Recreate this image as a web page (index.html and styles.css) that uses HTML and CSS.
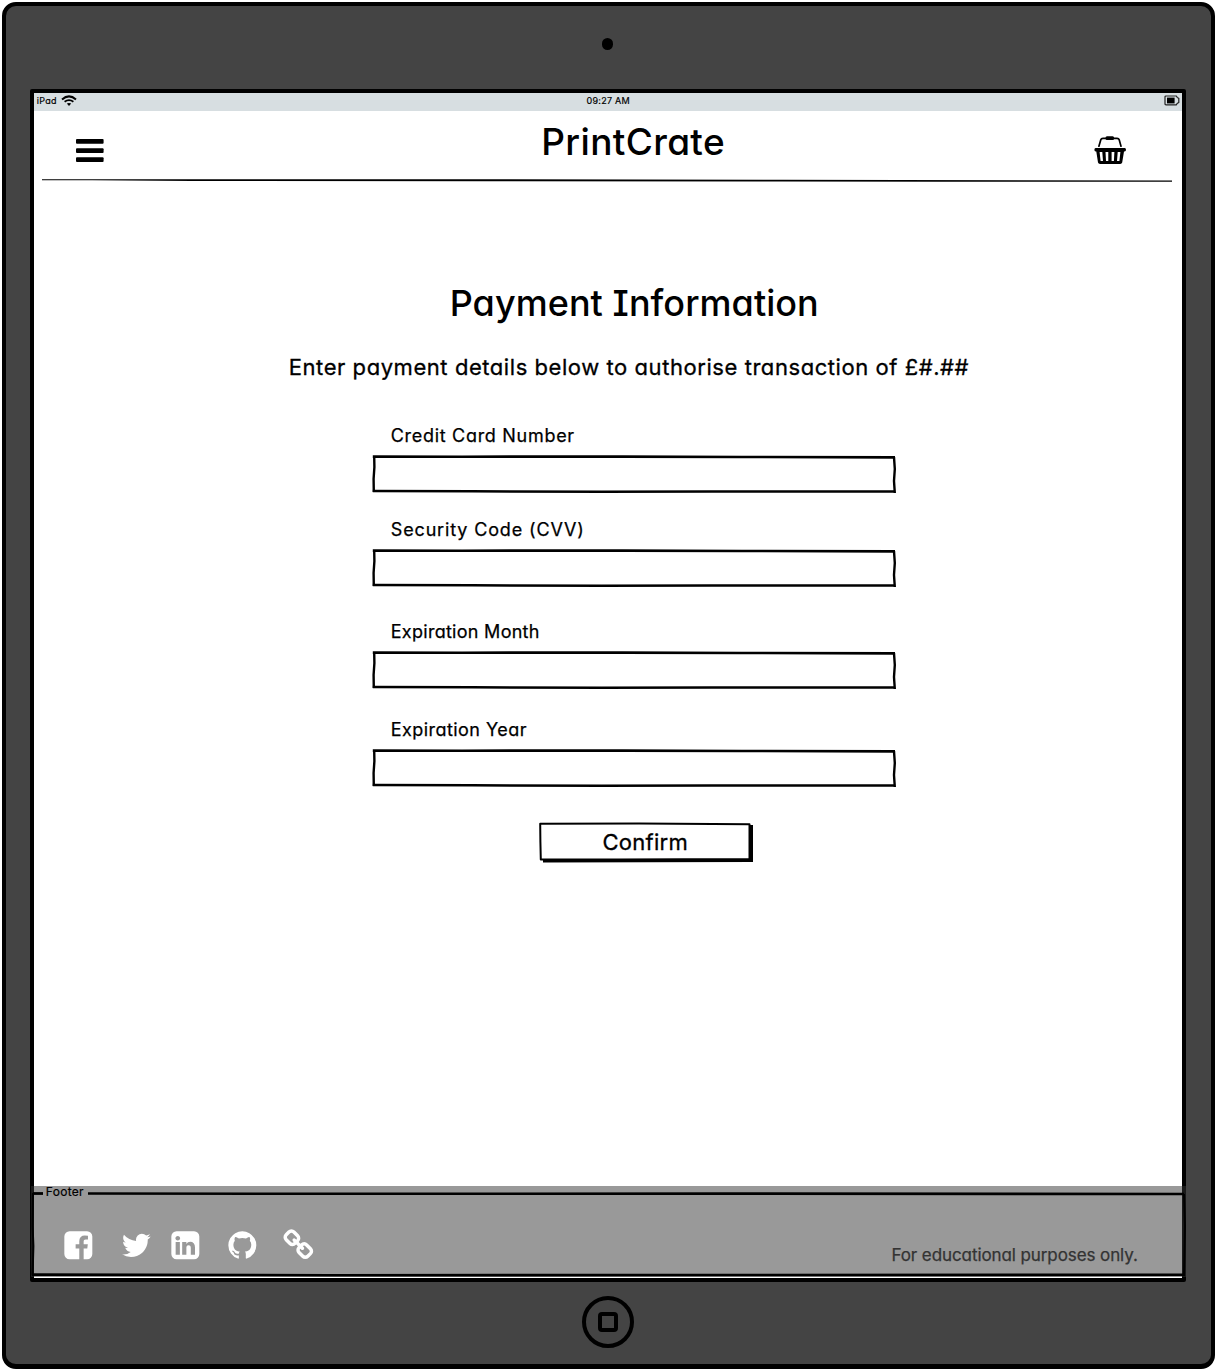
FILE: index.html
```html
<!DOCTYPE html>
<html lang="en">
<head>
<meta charset="utf-8">
<title>PrintCrate - Payment Information</title>
<link rel="stylesheet" href="styles.css">
</head>
<body>
<svg class="defs" width="0" height="0" aria-hidden="true">
  <symbol id="sketch-field" viewBox="0 0 524 38">
    <path fill="#fff" stroke="none" d="M2 2.5L522 3L522 36.5L2 36Z"/>
    <path stroke-width="2.6" d="M.8 1.6L90 1.7L250 1.6L370 2L523 2.400"/>
    <path stroke-width="2.4" d="M2.2 1L2.4 12L1.6 24L1.8 37"/>
    <path stroke-width="2.4" d="M522 2.2L522.8 14L522 26L522.8 38"/>
    <path stroke-width="2.5" d="M.8 36L100 36.3L230 36.7L340 36.5L523 36.5"/>
  </symbol>
</svg>
<div class="device">
  <div class="camera"></div>
  <div class="screen">
    <div class="status">
      <span class="carrier">iPad</span>
      <svg class="wifi" viewBox="0 0 16 11"><g fill="none" stroke="#000"><path stroke-width="2" d="M1 4.4Q8-1.6 15 4.4"/><path stroke-width="1.8" d="M3.6 6.8Q8 3.4 12.4 6.8"/></g><path d="M5.8 8.6Q8 7.2 10.2 8.6L8 11Z"/></svg>
      <span class="time">09:27 AM</span>
      <svg class="battery" viewBox="0 0 16 11"><path fill="none" stroke="#222" stroke-width="1.2" d="M2 1H12.3L13.2 2.4L14.8 3.4V7.4L13.2 8.4L12.3 9.8H2Q1 9.8 1 8.8V2Q1 1 2 1Z"/><path d="M3 2.6H10.6V8.4H3Z"/></svg>
    </div>
    <header class="header">
      <svg class="menu" viewBox="0 0 28 24"><rect width="27.6" height="4.8" y="0" rx="1"/><rect width="27.6" height="4.8" y="9.2" rx="1"/><rect width="27.6" height="4.8" y="18.2" rx="1"/></svg>
      <h1 class="brand">PrintCrate</h1>
      <svg class="basket" viewBox="0 0 32 29"><path fill="none" stroke="#000" stroke-width="1.7" stroke-linecap="round" stroke-linejoin="round" d="M4.9 10.2L6.8 3.8Q7.2 2.4 9 2.3H23Q24.8 2.4 25.2 3.8L27 10.2"/><rect x="11.5" y=".3" width="8.6" height="3.6" rx="1.5"/><path fill-rule="evenodd" d="M1.6 12H30.8Q32 12 32 13.8T30.6 15.6H30L28.2 26.6Q27.8 28 26.2 28H6Q4.400 28 4 26.600L2.300 15.600H1.700Q.4 15.600.4 13.800T1.600 12ZM5.600 16L6.600 25H9L8.300 16ZM11.500 16L12 25H14.300V16ZM17.600 16V25H19.900L20.400 16ZM23.700 16L23 25H25.400L26.400 16Z"/></svg>
    </header>
    <svg class="divider" viewBox="0 0 1130 4"><path d="M0 .2L190 .2L450 .3L740 .8L1130 1.400V2.700L900 2.700L740 2.600L450 2.300L150 2L50 1.300L0 1.200Z"/></svg>

    <main class="main">
      <h2 class="title">Payment Information</h2>
      <p class="lead">Enter payment details below to authorise transaction of £#.##</p>
      <form class="form">
        <div class="field card"><label>Credit Card Number</label><svg><use href="#sketch-field"/></svg></div>
        <div class="field code"><label>Security Code (CVV)</label><svg><use href="#sketch-field"/></svg></div>
        <div class="field month"><label>Expiration Month</label><svg><use href="#sketch-field"/></svg></div>
        <div class="field year"><label>Expiration Year</label><svg><use href="#sketch-field"/></svg></div>
        <button class="confirm" type="button">
          <svg viewBox="0 0 214 41"><path d="M4 37L210 37L210 3L214 3L214 40L4 40.500Z"/><path fill="#fff" stroke="#000" stroke-width="2" stroke-linejoin="round" d="M1.200 1.800L100 1.600L210.500 2.200L210.500 37L80 37.600L1.800 37.600L1.400 20Z"/></svg>
          <span>Confirm</span>
        </button>
      </form>
    </main>

    <footer class="footer">
      <svg class="footer-frame" viewBox="0 0 1156 92"><g fill="none" stroke="#000"><path stroke-width="2.800" d="M3 7.500H13"/><path stroke-width="2.600" d="M58 7.500L300 7.800L700 7.600L1154 8"/><path stroke-width="2" d="M3 7L2.600 40L3.400 60L2.600 89M1154 8L1155 40L1154 89"/><path stroke-width="2.600" d="M2 88.600L300 89.200L700 89L1155 88.800"/></g></svg>
      <span class="legend">Footer</span>
      <div class="bar">
        <nav class="social">
          <svg class="facebook" viewBox="0 0 1792 1792"><path d="M1376 128q119 0 203.500 84.500t84.500 203.500v960q0 119-84.500 203.500t-203.500 84.500h-188v-595h199l30-232h-229v-148q0-56 23.500-84t91.500-28l122-1v-207q-63-9-178-9-136 0-217.500 80t-81.500 226v171h-200v232h200v595h-532q-119 0-203.500-84.500t-84.500-203.500v-960q0-119 84.500-203.500t203.500-84.500h960z"/></svg>
          <svg class="twitter" viewBox="0 0 1792 1792"><path d="M1684 408q-67 98-162 167 1 14 1 42 0 130-38 259.500t-115.500 248.500-184.500 210.500-258 146-323 54.500q-271 0-496-145 35 4 78 4 225 0 401-138-105-2-188-64.500t-114-159.500q33 5 61 5 43 0 85-11-112-23-185.500-111.500t-73.500-205.500v-4q68 38 146 41-66-44-105-115t-39-154q0-88 44-163 121 149 294.500 238.500t371.500 99.500q-8-38-8-74 0-134 94.500-228.500t228.500-94.500q140 0 236 102 109-21 205-78-37 115-142 178 93-10 186-50z"/></svg>
          <svg class="linkedin" viewBox="0 0 1792 1792"><path d="M365 1414h231v-694h-231v694zm246-908q-1-52-36-86t-93-34-94.500 34-36.500 86q0 51 35.500 85.500t92.500 34.500h1q59 0 95-34.500t36-85.500zm585 908h231v-398q0-154-73-233t-193-79q-136 0-209 117h2v-101h-231q3 66 0 694h231v-388q0-38 7-56 15-35 45-59.500t74-24.500q116 0 116 157v371zm468-998v960q0 119-84.500 203.500t-203.500 84.500h-960q-119 0-203.500-84.500t-84.500-203.500v-960q0-119 84.500-203.500t203.500-84.500h960q119 0 203.500 84.500t84.500 203.500z"/></svg>
          <svg class="github" viewBox="0 0 1792 1792"><path d="M896 128q209 0 385.500 103t279.500 279.500 103 385.500q0 251-146.500 451.500t-378.500 277.500q-27 5-40-7t-13-30q0-3 .5-76.500t.5-134.500q0-97-52-142 57-6 102.500-18t94-39 81-66.500 53-105 20.500-150.500q0-119-79-206 37-91-8-204-28-9-81 11t-92 44l-38 24q-93-26-192-26t-192 26q-16-11-42.500-27t-83.500-38.500-85-13.500q-45 113-8 204-79 87-79 206 0 85 20.500 150t52.500 105 80.500 67 94 39 102.500 18q-39 36-49 103-21 10-45 15t-57 5-65.500-21.500-55.500-62.500q-19-32-48.500-52t-49.500-24l-20-3q-21 0-29 4.500t-5 11.500 9 14 13 12l7 5q22 10 43.500 38t31.500 51l10 23q13 38 44 61.500t67 30 69.500 7 55.500-3.500l23-4q0 38 .5 88.500t.5 54.500q0 18-13 30t-40 7q-232-77-378.500-277.500t-146.500-451.500q0-209 103-385.500t279.500-279.500 385.500-103z"/></svg>
          <svg class="link" viewBox="0 0 1792 1792"><path d="M1520 1216q0-40-28-68l-208-208q-28-28-68-28-42 0-72 32 3 3 19 18.500t21.500 21.500 15 19 13 25.500 3.500 27.500q0 40-28 68t-68 28q-15 0-27.500-3.500t-25.500-13-19-15-21.500-21.500-18.500-19q-33 31-33 73 0 40 28 68l206 207q27 27 68 27 40 0 68-26l147-146q28-28 28-67zm-703-705q0-40-28-68l-206-207q-28-28-68-28-39 0-68 27l-147 146q-28 28-28 67 0 40 28 68l208 208q27 27 68 27 42 0 72-31-3-3-19-18.500t-21.500-21.500-15-19-13-25.500-3.500-27.500q0-40 28-68t68-28q15 0 27.500 3.500t25.500 13 19 15 21.500 21.500 18.500 19q33-31 33-73zm895 705q0 120-85 203l-147 146q-83 83-203 83-121 0-204-85l-206-207q-83-83-83-203 0-123 88-209l-88-88q-86 88-208 88-120 0-204-84l-208-208q-84-84-84-204t85-203l147-146q83-83 203-83 121 0 204 85l206 207q83 83 83 203 0 123-88 209l88 88q86-88 208-88 120 0 204 84l208 208q84 84 84 204z"/></svg>
        </nav>
        <p class="note">For educational purposes only.</p>
      </div>
    </footer>
  </div>
  <div class="home"><div class="home-key"></div></div>
</div>
</body>
</html>
```
FILE: styles.css
```css
* { box-sizing: border-box; }

body {
  margin: 0;
  padding: 2px;
  background: #fff;
  color: #000;
  font-family: Inter, "Noto Sans", sans-serif;
  font-feature-settings: "cv11", "cv08";
}

h1, h2, p { margin: 0; font-weight: 400; }
svg { display: block; flex: none; }
.defs { position: absolute; }

/* Tablet body */
.device {
  display: flex;
  flex-direction: column;
  align-items: center;
  width: 1212.5px;
  height: 1367px;
  border: 4px solid #000;
  border-bottom-width: 5px;
  border-radius: 14px;
  background: #444;
}

.camera {
  width: 11.4px;
  height: 11.4px;
  margin: 32.3px 1px 0 0;
  border-radius: 50%;
  background: #000;
}

.screen {
  display: flex;
  flex-direction: column;
  width: 1156px;
  height: 1193px;
  margin-top: 39.3px;
  border: 4px solid #000;
  border-radius: 2px;
  background: #fff;
}

.home {
  display: grid;
  place-items: center;
  width: 52px;
  height: 52px;
  margin-top: 14px;
  border: 4px solid #000;
  border-radius: 50%;
}

.home-key {
  width: 20px;
  height: 20px;
  border: 4px solid #000;
  border-radius: 4px;
}

/* Status bar */
.status {
  display: grid;
  grid-template-columns: 27px 1fr auto 1fr 18px;
  height: 18px;
  background: #d7dee1;
  font-size: 9px;
  line-height: 16px;
  letter-spacing: .25px;
  -webkit-text-stroke: .2px;
}

.carrier { padding-left: 2.5px; }
.wifi { width: 16px; height: 11px; margin-top: 2.5px; }
.time { margin-right: 9px; }
.battery { grid-column: 5; width: 16px; height: 11px; margin-top: 2.5px; }

/* Header */
.header {
  display: flex;
  height: 68px;
  padding: 8px 56px 0 42px;
}

.menu { width: 28px; height: 24px; margin-top: 20px; }

.brand {
  margin-left: 437px;
  font-size: 37px;
  font-weight: 500;
  line-height: 46px;
  letter-spacing: .35px;
}

.basket { width: 32px; height: 29px; margin: 17px 0 0 auto; }
.divider { width: 1130px; height: 4px; margin-left: 8px; }

/* Payment form */
.main {
  width: 700px;
  margin: 97px 0 0 250px;
}

.title {
  height: 44px;
  font-size: 36px;
  font-weight: 500;
  line-height: 46px;
  letter-spacing: .05px;
  text-align: center;
}

.lead {
  margin: 29px 0 0 4.5px;
  font-size: 22px;
  line-height: 28px;
  letter-spacing: .56px;
  white-space: nowrap;
  -webkit-text-stroke: .3px;
}

.form {
  display: flex;
  flex-direction: column;
  width: 524px;
  margin: 42px 0 0 88px;
}

.field label {
  display: block;
  height: 24px;
  padding-left: 18.5px;
  font-size: 18px;
  line-height: 26px;
  -webkit-text-stroke: .25px;
}

.field svg {
  width: 524px;
  height: 38px;
  margin-top: 8px;
  fill: none;
  stroke: #000;
}

.card label { letter-spacing: .7px; }
.code { margin-top: 24px; }
.code label { letter-spacing: .85px; }
.month { margin-top: 32px; }
.month label { letter-spacing: .28px; }
.year { margin-top: 28px; }
.year label { letter-spacing: .45px; }

.confirm {
  display: grid;
  width: 214px;
  height: 41px;
  margin: 35px 0 0 167px;
  padding: 0;
  border: 0;
  background: none;
  color: #000;
  font: 400 22px/40px Inter, "Noto Sans", sans-serif;
  letter-spacing: .3px;
  -webkit-text-stroke: .3px;
}

.confirm svg, .confirm span { grid-area: 1 / 1; }
.confirm svg { width: 214px; height: 41px; }
.confirm span { padding-right: 2px; }

/* Footer overlaps the screen bezel on both sides */
.footer {
  position: relative;
  height: 91px;
  margin: auto -4px 1px -3px;
  background: rgba(50, 50, 50, .4975);
}

.footer-frame {
  position: absolute;
  top: 0;
  left: -1px;
  width: 1156px;
  height: 92px;
}

.legend {
  display: block;
  height: 16px;
  padding-left: 14.5px;
  font-size: 12px;
  line-height: 12px;
  letter-spacing: .3px;
  -webkit-text-stroke: .2px;
}

.bar {
  display: flex;
  justify-content: space-between;
  padding: 27.3px 48.5px 0 30.3px;
}

.social { display: flex; fill: #fff; }
.social svg { width: 32.67px; height: 32.67px; }
.twitter { margin-left: 26.2px; }
.linkedin { margin-left: 15.7px; }
.github { margin-left: 25.1px; }
.social .link { margin: -.5px 0 0 23.1px; }

.note {
  margin-top: 13.9px;
  color: #333;
  font-size: 17px;
  line-height: 25px;
  letter-spacing: -.09px;
  -webkit-text-stroke: .25px;
}
```
